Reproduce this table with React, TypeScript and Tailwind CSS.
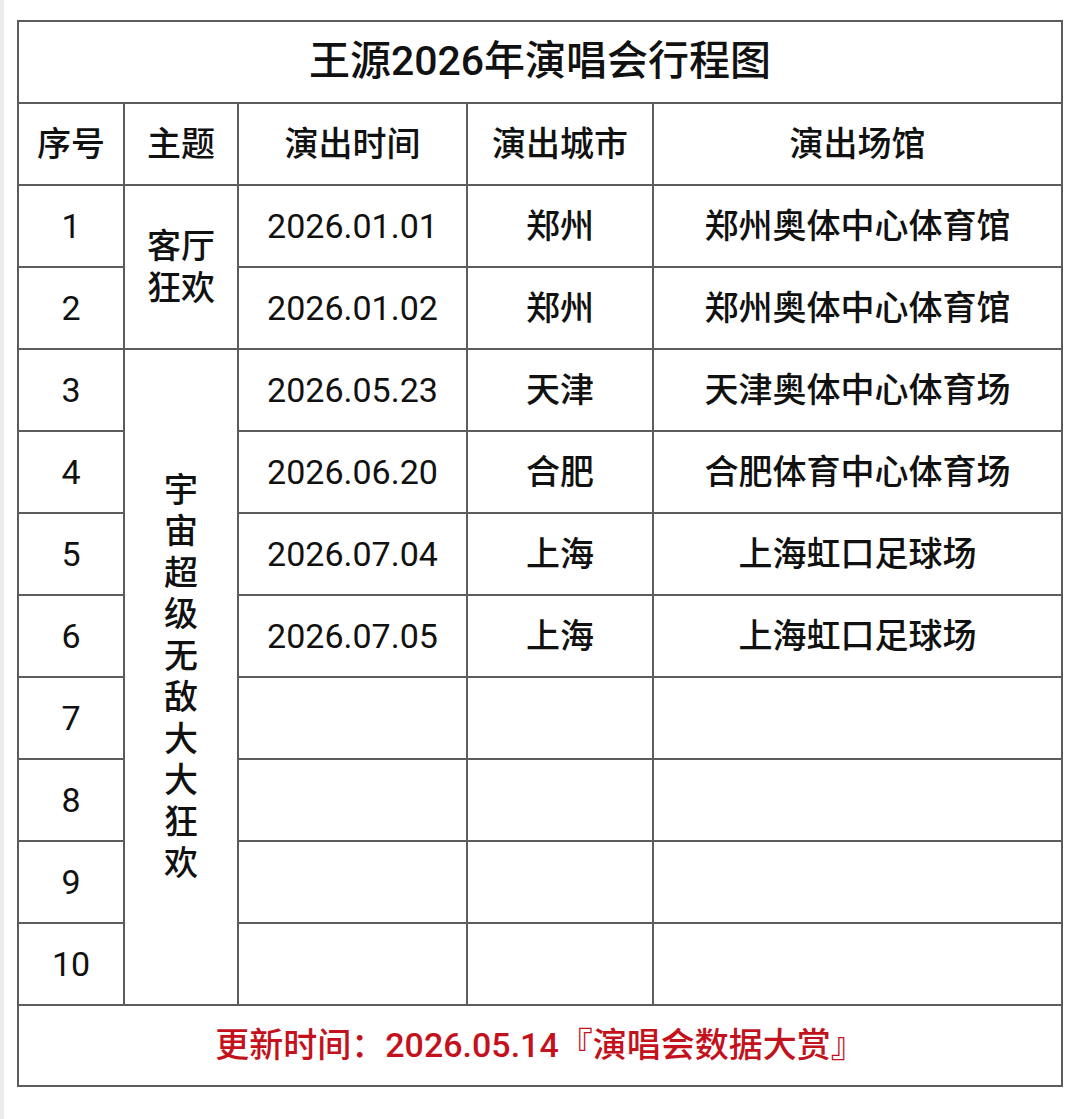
import React from 'react';

const rows = [
  { no: 1, date: '2026.01.01', city: '郑州', venue: '郑州奥体中心体育馆' },
  { no: 2, date: '2026.01.02', city: '郑州', venue: '郑州奥体中心体育馆' },
  { no: 3, date: '2026.05.23', city: '天津', venue: '天津奥体中心体育场' },
  { no: 4, date: '2026.06.20', city: '合肥', venue: '合肥体育中心体育场' },
  { no: 5, date: '2026.07.04', city: '上海', venue: '上海虹口足球场' },
  { no: 6, date: '2026.07.05', city: '上海', venue: '上海虹口足球场' },
  { no: 7, date: '', city: '', venue: '' },
  { no: 8, date: '', city: '', venue: '' },
  { no: 9, date: '', city: '', venue: '' },
  { no: 10, date: '', city: '', venue: '' },
];

const cell = 'border-2 border-[#5c5c5c] text-center align-middle p-0';

const App = () => {
  return (
    <div
      className="min-h-[1119px] w-[1080px] bg-white border-l-4 border-[#ececec] text-[#111] antialiased"
      style={{ fontFamily: "Roboto, 'Noto Sans CJK SC', 'Noto Sans', sans-serif" }}
    >
      <div className="pl-[13px] pt-[20px] pb-[30px]">
        <table className="table-fixed border-collapse w-[1044px]">
          <colgroup>
            <col className="w-[106px]" />
            <col className="w-[114px]" />
            <col className="w-[229px]" />
            <col className="w-[186px]" />
            <col className="w-[409px]" />
          </colgroup>
          <tbody>
            {/* Title */}
            <tr className="h-[82px]">
              <td colSpan={5} className={`${cell} text-[41px] font-medium`}>
                王源2026年演唱会行程图
              </td>
            </tr>

            {/* Header */}
            <tr className="h-[82px] text-[34px] font-medium">
              <td className={cell}>序号</td>
              <td className={cell}>主题</td>
              <td className={cell}>演出时间</td>
              <td className={cell}>演出城市</td>
              <td className={cell}>演出场馆</td>
            </tr>

            {rows.map((row, i) => (
              <tr key={row.no} className="h-[82px] text-[34px] font-medium">
                <td className={`${cell} font-normal`}>{row.no}</td>
                {i === 0 && (
                  <td rowSpan={2} className={`${cell} leading-[42px]`}>
                    客厅
                    <br />
                    狂欢
                  </td>
                )}
                {i === 2 && (
                  <td rowSpan={8} className={`${cell} leading-[41.5px]`}>
                    <div className="flex flex-col items-center">
                      {'宇宙超级无敌大大狂欢'.split('').map((ch, k) => (
                        <span key={k}>{ch}</span>
                      ))}
                    </div>
                  </td>
                )}
                <td className={`${cell} font-normal`}>{row.date}</td>
                <td className={cell}>{row.city}</td>
                <td className={cell}>{row.venue}</td>
              </tr>
            ))}

            {/* Footer */}
            <tr className="h-[81px]">
              <td colSpan={5} className={`${cell} text-[34px] font-medium text-[#c4121c]`}>
                更新时间：2026.05.14『演唱会数据大赏』
              </td>
            </tr>
          </tbody>
        </table>
      </div>
    </div>
  );
};

export default App;
